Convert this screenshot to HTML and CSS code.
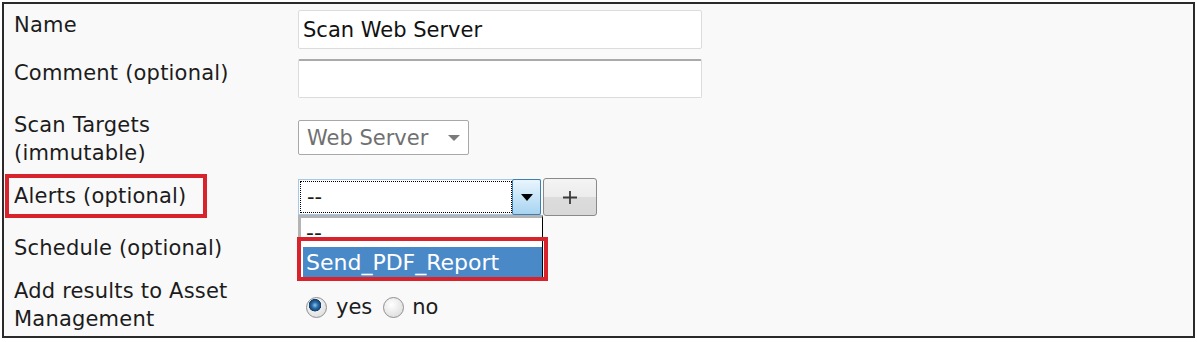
FILE: index.html
```html
<!DOCTYPE html>
<html>
<head>
    <title>New Scan Configuration</title>
    <link rel="stylesheet" href="styles.css">
</head>
<body>
    <div class="panel">
        <div class="row row-name">
            <div class="label">Name</div>
            <div class="field">
                <input type="text" class="textbox" value="Scan Web Server">
            </div>
        </div>

        <div class="row row-comment">
            <div class="label">Comment (optional)</div>
            <div class="field">
                <input type="text" class="textbox comment" value="">
            </div>
        </div>

        <div class="row row-targets">
            <div class="label">Scan Targets<br>(immutable)</div>
            <div class="field">
                <div class="select disabled">
                    <span>Web Server</span>
                    <span class="caret grey"></span>
                </div>
            </div>
        </div>

        <div class="row row-alerts">
            <div class="label">
                <div class="highlight">Alerts (optional)</div>
            </div>
            <div class="field alerts">
                <div class="select open">
                    <span class="focus">--</span>
                    <span class="drop-btn"><span class="caret"></span></span>
                </div>
                <button class="add-btn">
                    <svg width="16" height="16" viewBox="0 0 16 16">
                        <path d="M1 8.5H15M8 2V15" stroke="#3a3a3a" stroke-width="1.8" fill="none"/>
                    </svg>
                </button>

                <ul class="dropdown">
                    <li>--</li>
                    <li class="selected">Send_PDF_Report</li>
                </ul>
                <div class="option-mark"></div>
            </div>
        </div>

        <div class="row row-schedule">
            <div class="label">Schedule (optional)</div>
        </div>

        <div class="row row-asset">
            <div class="label">Add results to Asset<br>Management</div>
            <div class="field radios">
                <span class="radio checked"></span>
                <span class="radio-text">yes</span>
                <span class="radio"></span>
                <span class="radio-text">no</span>
            </div>
        </div>
    </div>
</body>
</html>
```

FILE: styles.css
```css
body {
    margin: 0;
    background-color: #ffffff;
    font-family: "DejaVu Sans", Verdana, sans-serif;
    font-size: 21px;
    color: #1c1c1c;
}

.panel {
    margin: 2px 0 0 2px;
    width: 1193px;
    height: 336px;
    box-sizing: border-box;
    border: 2px solid #2a2a2a;
    background-color: #f9f9f9;
    padding-left: 10px;
}

.row {
    display: flex;
    align-items: flex-start;
}

.label {
    width: 284px;
    flex-shrink: 0;
    line-height: 28px;
    letter-spacing: 0.2px;
}

/* row heights follow the original form */
.row-name { height: 50px; }
.row-name .label { margin-top: 7px; }
.row-name .field { margin-top: 6px; }

.row-comment { height: 50px; }
.row-comment .label { margin-top: 5px; }
.row-comment .field { margin-top: 5px; }

.row-targets { height: 66px; }
.row-targets .label { margin-top: 7px; }
.row-targets .field { margin-top: 16px; }

.row-alerts { height: 55px; }
.row-alerts .label { margin-top: 4px; }

.row-schedule { height: 47px; }
.row-schedule .label { margin-top: 9px; }

.row-asset { height: 60px; }
.row-asset .label { margin-top: 5px; }

.textbox {
    display: block;
    width: 404px;
    height: 39px;
    box-sizing: border-box;
    margin: 0;
    padding: 0 4px;
    border: 1px solid #dcdcdc;
    border-radius: 2px;
    background-color: #ffffff;
    font-family: inherit;
    font-size: 21px;
    color: #111111;
    outline: none;
}

.textbox.comment {
    border-top: 2px solid #a9a9a9;
}

.select {
    display: flex;
    align-items: center;
    box-sizing: border-box;
    background-color: #ffffff;
}

.select.disabled {
    width: 171px;
    height: 35px;
    padding: 0 8px 0 8px;
    border: 1px solid #a8a8a8;
    border-radius: 2px;
    color: #707070;
    justify-content: space-between;
}

.caret {
    display: inline-block;
    width: 0;
    height: 0;
    border-left: 6px solid transparent;
    border-right: 6px solid transparent;
    border-top: 7px solid #000000;
}

.caret.grey {
    border-top-color: #7a7a7a;
    border-top-width: 6px;
}

/* alerts select with its open list */
.field.alerts {
    position: relative;
    display: flex;
    align-items: center;
    margin-top: 8px;
    height: 38px;
}

.select.open {
    width: 243px;
    height: 36px;
    border: 1px solid #a6c8e8;
    padding: 1px;
}

.focus {
    flex: 1;
    height: 100%;
    box-sizing: border-box;
    border: 1px dotted #000000;
    padding-left: 6px;
    line-height: 30px;
}

.drop-btn {
    display: flex;
    align-items: center;
    justify-content: center;
    width: 29px;
    height: 36px;
    margin: -2px -2px -2px 0;
    box-sizing: border-box;
    border: 1px solid #3d7fb3;
    border-radius: 2px;
    background: linear-gradient(#e9f5fd, #a7d4f2);
}

.add-btn {
    display: flex;
    align-items: center;
    justify-content: center;
    width: 54px;
    height: 38px;
    margin-left: 2px;
    padding: 0;
    border: 1px solid #8a8a8a;
    border-radius: 3px;
    background: linear-gradient(#f4f4f4 0%, #ececec 50%, #dcdcdc 51%, #d8d8d8 100%);
}

.dropdown {
    position: absolute;
    top: 37px;
    left: 0;
    width: 245px;
    height: 65px;
    box-sizing: border-box;
    margin: 0;
    padding: 0 0 0 2px;
    list-style: none;
    background-color: #ffffff;
    border-top: 3px solid #b4b4b4;
    border-left: 3px solid #b4b4b4;
    border-right: 1px solid #000000;
}

.dropdown li {
    padding-left: 3px;
    font-size: 22px;
    line-height: 29px;
}

.dropdown li.selected {
    line-height: 31px;
    background-color: #4a89c8;
    color: #ffffff;
}

.option-mark {
    position: absolute;
    top: 59px;
    left: -1px;
    width: 251px;
    height: 44px;
    box-sizing: border-box;
    border: 4px solid #d8232d;
}

.highlight {
    width: 202px;
    margin-left: -9px;
    box-sizing: border-box;
    padding: 4px 0 4px 5px;
    border: 4px solid #d8232d;
}

/* radio buttons */
.field.radios {
    display: flex;
    align-items: center;
    margin-top: 25px;
    padding-left: 8px;
}

.radio {
    width: 21px;
    height: 21px;
    box-sizing: border-box;
    border: 1px solid #8f8f8f;
    border-radius: 50%;
    background: radial-gradient(circle at 40% 35%, #ffffff, #d6d6d6);
}

.radio.checked {
    background:
        radial-gradient(circle at 42% 38%, #8cc8f0 0, #2a6eaa 3px, #143f68 6px, transparent 6.5px),
        radial-gradient(circle at 40% 35%, #ffffff, #d6d6d6);
}

.radio-text {
    margin: 0 11px 0 9px;
    line-height: 21px;
}

.radio-text:last-child {
    margin-left: 8px;
}
```
